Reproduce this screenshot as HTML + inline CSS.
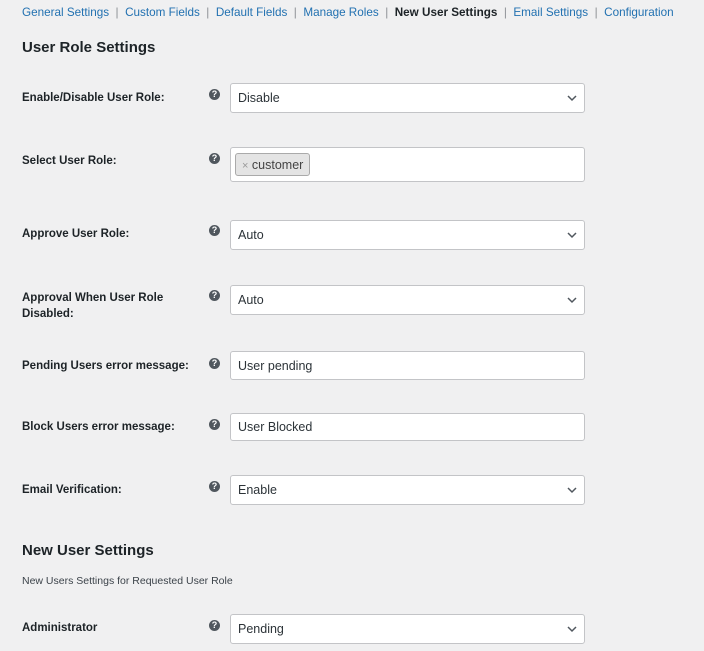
<!DOCTYPE html>
<html><head><meta charset="utf-8"><style>
body{margin:0;width:704px;height:651px;background:#f0f0f1;font-family:"Liberation Sans",sans-serif;color:#1d2327;position:relative;overflow:hidden}
.a{position:absolute}
.nav{top:6px;left:22px;font-size:11.7px;color:#8c8f94;white-space:nowrap}
.nav a{color:#2271b1;text-decoration:none}
.nav b{color:#1d2327}
h2{position:absolute;margin:0;font-size:15px;font-weight:600;left:22px}
.lbl{position:absolute;left:22px;font-size:11.5px;font-weight:bold;width:180px;line-height:16px}
.q{position:absolute;left:209px;width:11px;height:11px;border-radius:50%;background:#50575e;color:#fff;font-size:9px;font-weight:bold;text-align:center;line-height:11px}
.f{position:absolute;left:230px;width:355px;background:#fff;border:1px solid #c3c4c7;border-radius:3px;font-size:12.5px;box-sizing:border-box;padding-left:7px;color:#2c3338}
.f svg{position:absolute;right:7px;top:50%;margin-top:-3px}
</style></head><body>
<div class="a nav"><a>General Settings</a> &nbsp;| &nbsp;<a>Custom Fields</a> &nbsp;| &nbsp;<a>Default Fields</a> &nbsp;| &nbsp;<a>Manage Roles</a> &nbsp;| &nbsp;<b>New User Settings</b> &nbsp;| &nbsp;<a>Email Settings</a> &nbsp;| &nbsp;<a>Configuration</a></div>
<h2 style="top:39px">User Role Settings</h2>

<div class="lbl" style="top:90px">Enable/Disable User Role:</div><div class="q" style="top:89px">?</div>
<div class="f" style="top:83px;height:30px;line-height:29px">Disable<svg width="10" height="7"><path d="M1 1l4 4 4-4" stroke="#50575e" stroke-width="1.5" fill="none"/></svg></div>

<div class="lbl" style="top:153px">Select User Role:</div><div class="q" style="top:153px">?</div>
<div class="f" style="top:147px;height:35px;padding-left:4px"><span class="a" style="left:4px;top:5px;height:23px;line-height:22px;padding:0 6px;background:#e4e4e4;border:1px solid #aaa;border-radius:3px;box-sizing:border-box;font-size:12.5px;color:#444"><span style="color:#999;font-size:11px">×</span> customer</span></div>

<div class="lbl" style="top:226px">Approve User Role:</div><div class="q" style="top:225px">?</div>
<div class="f" style="top:220px;height:30px;line-height:29px">Auto<svg width="10" height="7"><path d="M1 1l4 4 4-4" stroke="#50575e" stroke-width="1.5" fill="none"/></svg></div>

<div class="lbl" style="top:290px">Approval When User Role Disabled:</div><div class="q" style="top:290px">?</div>
<div class="f" style="top:285px;height:30px;line-height:29px">Auto<svg width="10" height="7"><path d="M1 1l4 4 4-4" stroke="#50575e" stroke-width="1.5" fill="none"/></svg></div>

<div class="lbl" style="top:358px">Pending Users error message:</div><div class="q" style="top:358px">?</div>
<div class="f" style="top:351px;height:29px;line-height:28px">User pending</div>

<div class="lbl" style="top:419px">Block Users error message:</div><div class="q" style="top:419px">?</div>
<div class="f" style="top:413px;height:28px;line-height:27px">User Blocked</div>

<div class="lbl" style="top:482px">Email Verification:</div><div class="q" style="top:481px">?</div>
<div class="f" style="top:475px;height:30px;line-height:29px">Enable<svg width="10" height="7"><path d="M1 1l4 4 4-4" stroke="#50575e" stroke-width="1.5" fill="none"/></svg></div>

<h2 style="top:542px">New User Settings</h2>
<div class="a" style="left:22px;top:575px;font-size:10.5px;color:#3c434a">New Users Settings for Requested User Role</div>

<div class="lbl" style="top:620px">Administrator</div><div class="q" style="top:620px">?</div>
<div class="f" style="top:614px;height:30px;line-height:29px">Pending<svg width="10" height="7"><path d="M1 1l4 4 4-4" stroke="#50575e" stroke-width="1.5" fill="none"/></svg></div>
</body></html>
